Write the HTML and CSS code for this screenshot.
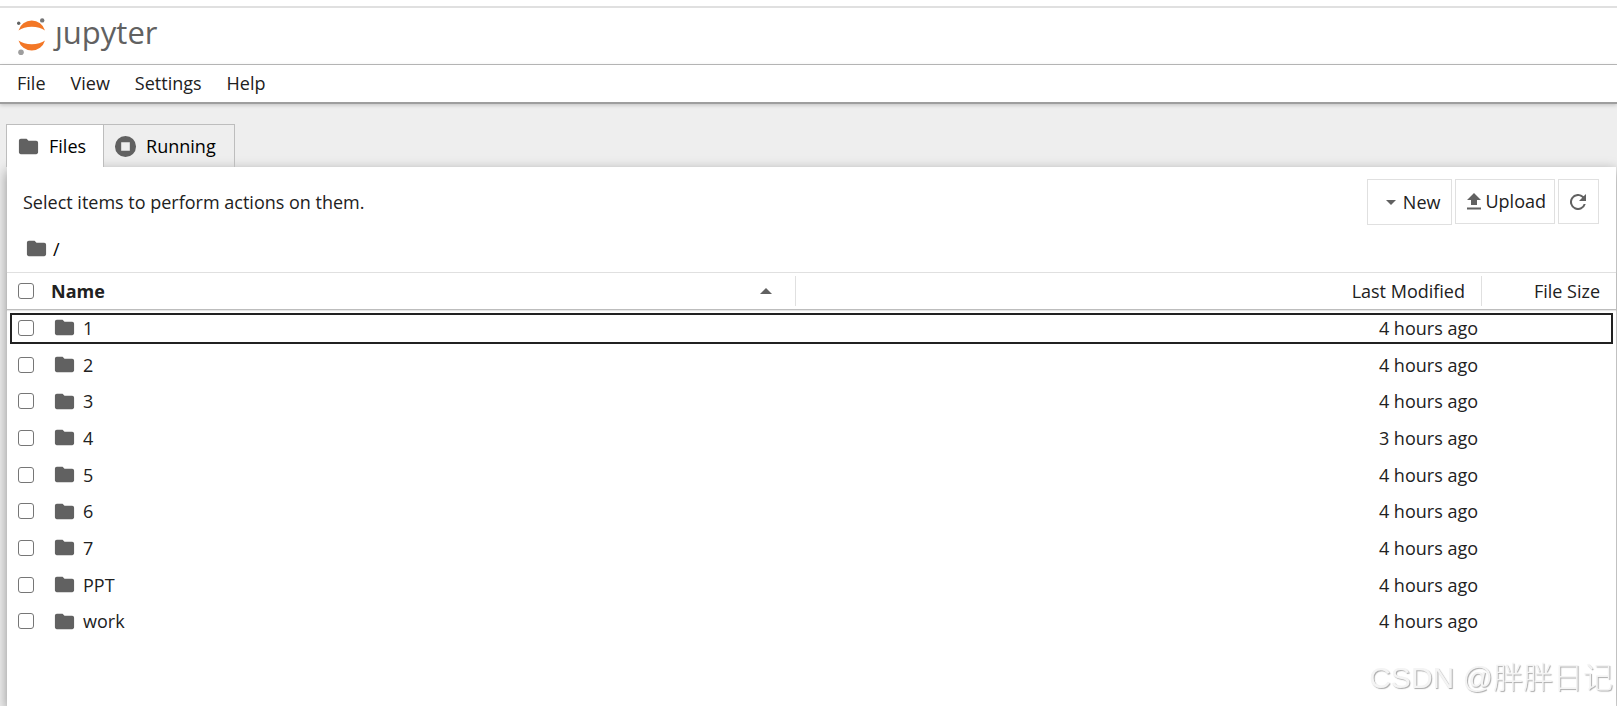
FILE: index.html
```
<!DOCTYPE html>
<html lang="en">
<head>
  <meta charset="UTF-8" />
  <title>Home</title>
  <link rel="stylesheet" href="styles.css">
</head>
<body>
  <svg class="sprite" aria-hidden="true">
    <symbol id="folder" viewBox="0 0 24 24">
      <path d="M10 4H4c-1.100 0-2 .9-2 2v12c0 1.100.9 2 2 2h16c1.100 0 2-.9 2-2V8c0-1.100-.9-2-2-2h-8l-2-2z"/>
    </symbol>
  </svg>

  <header class="header">
    <a class="logo" href="#">
      <svg class="logo__mark" viewBox="0 0 30 38" aria-hidden="true">
        <path fill="#f37726" d="M1.500 12.500a13.800 13.800 0 0 1 26.500 0a16.500 9 0 0 0-26.500 0z"/>
        <path fill="#f37726" d="M1.500 22.500a13.800 13.800 0 0 0 26.500 0a16.500 9 0 0 1-26.500 0z"/>
        <circle cx="25.200" cy="2.400" r="2.200" fill="#767677"/>
        <circle cx="1.700" cy="5.300" r="1.700" fill="#616262"/>
        <circle cx="4" cy="34.200" r="2.800" fill="#9e9e9e"/>
      </svg>
      <span class="logo__text">ȷupyter</span>
    </a>
  </header>

  <nav class="menu">
    <button class="menu__item">File</button>
    <button class="menu__item">View</button>
    <button class="menu__item">Settings</button>
    <button class="menu__item">Help</button>
  </nav>

  <main class="main">
    <div class="tabs" role="tablist">
      <button class="tab tab--files tab--active" role="tab" aria-selected="true">
        <svg class="icon"><use href="#folder"/></svg>
        Files
      </button>
      <button class="tab" role="tab" aria-selected="false">
        <svg class="icon" viewBox="0 0 24 24"><path fill-rule="evenodd" d="M12 1a11 11 0 1 0 0 22a11 11 0 1 0 0-22zM7.500 7.500h9v9h-9z"/></svg>
        Running
      </button>
    </div>

    <section class="panel">
      <div class="toolbar">
        <span class="toolbar__hint">Select items to perform actions on them.</span>
        <button class="btn btn--new">
          <svg class="btn__caret" viewBox="0 0 10 5"><path d="M0 0h10L5 5z"/></svg>
          New
        </button>
        <button class="btn btn--upload">
          <svg class="btn__upload" viewBox="0 0 14 17"><path d="M4 12V7H0l7-7 7 7h-4v5zM0 14.500h14v2H0z"/></svg>
          Upload
        </button>
        <button class="btn btn--refresh" aria-label="Refresh">
          <svg class="btn__refresh" viewBox="4 4 16 16"><path d="M17.650 6.350A8 8 0 1 0 19.730 14h-2.080A6 6 0 1 1 12 6c1.660 0 3.140.69 4.220 1.780L13 11h7V4z"/></svg>
        </button>
      </div>

      <div class="crumbs">
        <svg class="icon"><use href="#folder"/></svg>
        <a class="crumbs__link" href="#">/</a>
      </div>

      <table class="files">
        <thead>
          <tr>
            <th class="files__check"><input type="checkbox" class="check" aria-label="Select all"></th>
            <th class="files__name files__name--head">
              <div class="files__sort">
                Name
                <svg class="files__arrow" viewBox="0 0 12 6"><path d="M0 6h12L6 0z"/></svg>
              </div>
            </th>
            <th class="files__modified"><div class="files__label">Last Modified</div></th>
            <th class="files__size">File Size</th>
          </tr>
        </thead>
        <tbody>
          <tr class="files__row--focus">
            <td class="files__check"><input type="checkbox" class="check" aria-label="1"></td>
            <td><div class="files__item"><svg class="icon"><use href="#folder"/></svg>1</div></td>
            <td class="files__modified">4 hours ago</td>
            <td></td>
          </tr>
          <tr>
            <td class="files__check"><input type="checkbox" class="check" aria-label="2"></td>
            <td><div class="files__item"><svg class="icon"><use href="#folder"/></svg>2</div></td>
            <td class="files__modified">4 hours ago</td>
            <td></td>
          </tr>
          <tr>
            <td class="files__check"><input type="checkbox" class="check" aria-label="3"></td>
            <td><div class="files__item"><svg class="icon"><use href="#folder"/></svg>3</div></td>
            <td class="files__modified">4 hours ago</td>
            <td></td>
          </tr>
          <tr>
            <td class="files__check"><input type="checkbox" class="check" aria-label="4"></td>
            <td><div class="files__item"><svg class="icon"><use href="#folder"/></svg>4</div></td>
            <td class="files__modified">3 hours ago</td>
            <td></td>
          </tr>
          <tr>
            <td class="files__check"><input type="checkbox" class="check" aria-label="5"></td>
            <td><div class="files__item"><svg class="icon"><use href="#folder"/></svg>5</div></td>
            <td class="files__modified">4 hours ago</td>
            <td></td>
          </tr>
          <tr>
            <td class="files__check"><input type="checkbox" class="check" aria-label="6"></td>
            <td><div class="files__item"><svg class="icon"><use href="#folder"/></svg>6</div></td>
            <td class="files__modified">4 hours ago</td>
            <td></td>
          </tr>
          <tr>
            <td class="files__check"><input type="checkbox" class="check" aria-label="7"></td>
            <td><div class="files__item"><svg class="icon"><use href="#folder"/></svg>7</div></td>
            <td class="files__modified">4 hours ago</td>
            <td></td>
          </tr>
          <tr>
            <td class="files__check"><input type="checkbox" class="check" aria-label="PPT"></td>
            <td><div class="files__item"><svg class="icon"><use href="#folder"/></svg>PPT</div></td>
            <td class="files__modified">4 hours ago</td>
            <td></td>
          </tr>
          <tr>
            <td class="files__check"><input type="checkbox" class="check" aria-label="work"></td>
            <td><div class="files__item"><svg class="icon"><use href="#folder"/></svg>work</div></td>
            <td class="files__modified">4 hours ago</td>
            <td></td>
          </tr>
        </tbody>
      </table>
    </section>
  </main>

  <div class="watermark">CSDN @胖胖日记</div>
</body>
</html>
```
FILE: styles.css
```
:root {
  --text: #212121;
  --icon: #616161;
  --line: #e0e0e0;
  --line-dark: #bdbdbd;
}

* {
  box-sizing: border-box;
}

body {
  margin: 0;
  min-height: 100vh;
  display: flex;
  flex-direction: column;
  background: #fff;
  color: var(--text);
  font-family: "Open Sans", "Noto Sans CJK SC", sans-serif;
  font-size: 18px;
  line-height: 24px;
}

button {
  font: inherit;
  color: inherit;
  background: none;
  border: 0;
  padding: 0;
}

.sprite {
  display: none;
}

.icon {
  width: 23px;
  height: 23px;
  flex: none;
  fill: var(--icon);
}

/* Header and menu */
.header {
  margin-top: 6px;
  height: 59px;
  padding: 10px 17px 0;
  border-top: 2px solid var(--line);
  border-bottom: 1px solid var(--line-dark);
}

.logo {
  display: flex;
  gap: 8px;
  color: var(--icon);
  text-decoration: none;
}

.logo__mark {
  width: 30px;
  height: 38px;
}

.logo__text {
  font-size: 31px;
  line-height: 28px;
}

.menu {
  position: relative;
  display: flex;
  gap: 25px;
  height: 39px;
  padding: 0 17px 2px;
  border-bottom: 2px solid #9e9e9e;
  box-shadow: 0 1px 4px rgba(0, 0, 0, 0.2);
}

/* Tabs */
.main {
  flex: 1;
  display: flex;
  flex-direction: column;
  padding: 20px 1px 0 6px;
  background: #eee;
}

.tabs {
  position: relative;
  z-index: 1;
  display: flex;
}

.tab {
  display: flex;
  align-items: center;
  gap: 9px;
  height: 43px;
  padding: 0 18px 0 10px;
  border: 1px solid var(--line-dark);
  border-bottom: 0;
  border-left: 0;
  color: #000;
}

.tab--files {
  padding-right: 17px;
  border-left: 1px solid var(--line-dark);
}

.tab--active {
  background: #fff;
}

.panel {
  flex: 1;
  margin-left: 1px;
  background: #fff;
  box-shadow: 0 4px 12px rgba(0, 0, 0, 0.4);
}

/* Toolbar */
.toolbar {
  display: flex;
  align-items: flex-start;
  gap: 3px;
  padding: 12px 17px 0 16px;
}

.toolbar__hint {
  flex: 1;
  padding-top: 11px;
}

.btn {
  display: flex;
  align-items: center;
  height: 45px;
  border: 1px solid var(--line);
  fill: var(--icon);
}

.btn--new {
  height: 46px;
  gap: 7px;
  padding: 0 11px 0 18px;
}

.btn--upload {
  gap: 4px;
  padding: 0 8px 1px 11px;
}

.btn--refresh {
  padding: 0 12px 0 11px;
}

.btn__caret {
  width: 10px;
  height: 5px;
}

.btn__upload {
  width: 14px;
  height: 17px;
}

.btn__refresh {
  width: 16px;
  height: 16px;
}

.crumbs {
  display: flex;
  align-items: center;
  gap: 5px;
  height: 47px;
  padding-left: 18px;
}

.crumbs__link {
  color: #000;
  text-decoration: none;
}

/* File list */
.files {
  width: 100%;
  table-layout: fixed;
  border-collapse: separate;
  border-spacing: 0;
}

.files th,
.files td {
  padding: 0;
  font-weight: 400;
  text-align: left;
}

.files thead tr {
  box-shadow: 0 1px 1px rgba(0, 0, 0, 0.1);
}

.files th {
  height: 38px;
  border-top: 1px solid var(--line);
  border-bottom: 1px solid var(--line-dark);
}

.files td {
  height: 37px;
  padding-bottom: 2px;
}

.files tr:nth-child(3n) td {
  height: 36px;
}

.files .files__check {
  width: 44px;
  padding-left: 11px;
}

.files .files__name--head {
  font-weight: 700;
}

.files__sort {
  display: flex;
  align-items: center;
  justify-content: space-between;
  width: calc(50% + 109px);
  height: 30px;
  padding-right: 23px;
  border-right: 1px solid var(--line);
}

.files__arrow {
  width: 12px;
  height: 6px;
  fill: var(--icon);
}

.files .files__modified {
  width: 160px;
  text-align: right;
}

.files__label {
  height: 30px;
  padding-right: 16px;
  border-right: 1px solid var(--line);
  line-height: 30px;
}

.files td.files__modified {
  padding-right: 4px;
}

.files .files__size {
  width: 134px;
  padding-right: 16px;
  text-align: right;
}

.files__item {
  display: flex;
  align-items: center;
  gap: 7px;
  padding-left: 2px;
}

.files__row--focus {
  outline: 2px solid var(--text);
  outline-offset: -5px;
}

.check {
  display: block;
  appearance: none;
  width: 16px;
  height: 16px;
  margin: 0;
  border: 1px solid #767676;
  border-radius: 3px;
  background: #fff;
}

.watermark {
  position: fixed;
  right: 4px;
  bottom: 6px;
  color: #f4f4f4;
  font-family: "Liberation Sans", "Noto Sans CJK SC", sans-serif;
  font-size: 30px;
  font-weight: 300;
  line-height: 44px;
  text-shadow: 1px 1px 1px #aaa;
}
```
